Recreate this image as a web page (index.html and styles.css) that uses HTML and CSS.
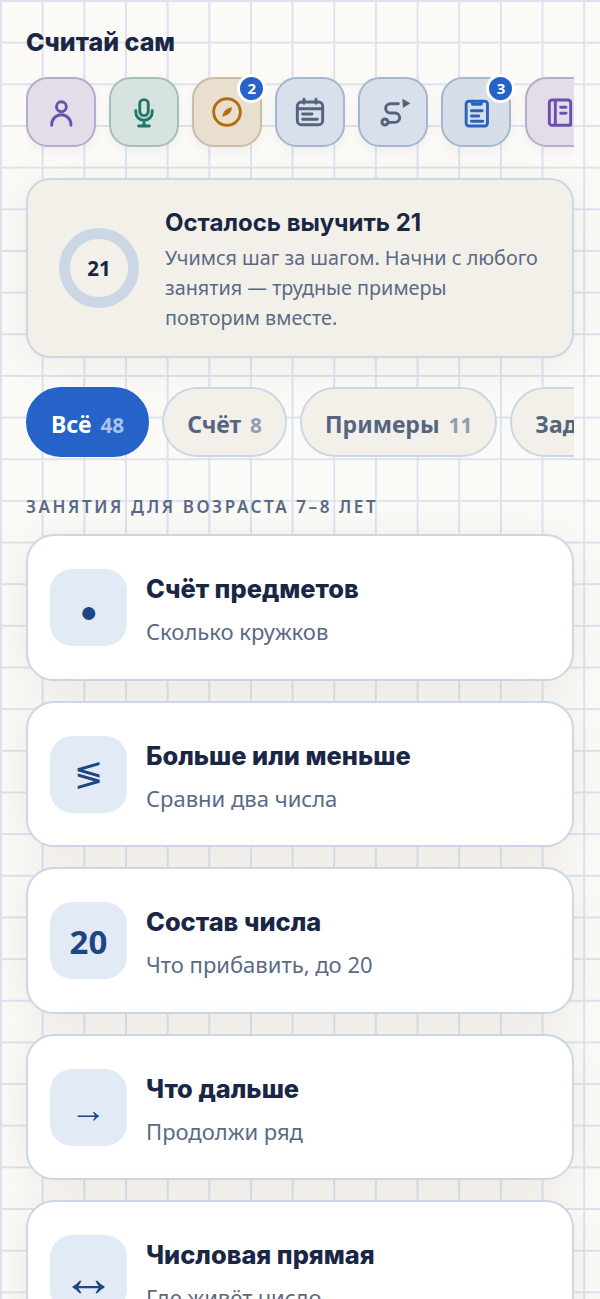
FILE: index.html
```html
<!DOCTYPE html>
<html lang="ru">
<head>
    <meta charset="UTF-8">
    <meta name="viewport" content="width=device-width, initial-scale=1.0">
    <title>Считай сам</title>
    <link rel="stylesheet" href="styles.css">
</head>
<body>
    <main class="page">
        <h1 class="app-title">Считай сам</h1>

        <div class="tools">
            <button class="tool tool-violet">
                <svg viewBox="0 0 24 24"><circle cx="12.300" cy="8" r="3.700"/><path d="M5 22c0-4.500 3-8 7.250-8s7.250 3.500 7.250 8"/></svg>
            </button>
            <button class="tool tool-green">
                <svg viewBox="0 0 24 24"><rect x="8.800" y="2.700" width="6.400" height="12" rx="3.200"/><path d="M5.800 11v1a6.200 6.200 0 0 0 12.400 0v-1M12 18.500v4M8 22.500h8"/></svg>
            </button>
            <button class="tool tool-amber">
                <svg viewBox="0 0 24 24"><circle cx="12" cy="12" r="10"/><path class="fill" d="M15.500 8.500c.2 2.800-1.200 5.700-7 7 .5-3.500 2.700-6.200 7-7z"/></svg>
                <span class="badge">2</span>
            </button>
            <button class="tool tool-slate">
                <svg viewBox="0 0 24 24"><rect x="2.500" y="4.500" width="19" height="17" rx="3"/><path d="M2.500 9.500h19M7.500 2.500v3M16.500 2.500v3M6.500 13.500h7M6.500 17.500h11"/></svg>
            </button>
            <button class="tool tool-slate">
                <svg viewBox="0 0 24 24"><circle cx="6" cy="19.500" r="2.300"/><path d="M8.300 19.800h5.200a3.500 3.500 0 0 0 0-7H10a3.500 3.500 0 0 1 0-7h6"/><path class="fill" d="M19 2l6 3.500-5.500 3.500z"/></svg>
            </button>
            <button class="tool tool-blue">
                <svg viewBox="0 0 24 24"><rect x="4.600" y="4" width="16" height="18.500" rx="2"/><path d="M9.300 4v2.200h6.600V4M8.600 11h8M8.600 15h5.500M8.600 19h8.500"/></svg>
                <span class="badge">3</span>
            </button>
            <button class="tool tool-violet">
                <svg viewBox="0 0 24 24"><path d="M20 22H6a2 2 0 0 1-2-2V5a2 2 0 0 1 2-2h12a2 2 0 0 1 2 2v17M8.500 3v19M12.500 8.500h4M12.500 13h4"/></svg>
            </button>
        </div>

        <section class="summary">
            <div class="ring">21</div>
            <div class="summary-text">
                <h2>Осталось выучить 21</h2>
                <p>Учимся шаг за шагом. Начни с любого занятия — трудные примеры повторим вместе.</p>
            </div>
        </section>

        <div class="filters">
            <button class="chip chip-active">Всё <span>48</span></button>
            <button class="chip">Счёт <span>8</span></button>
            <button class="chip">Примеры <span>11</span></button>
            <button class="chip">Задачи <span>9</span></button>
        </div>

        <h3 class="section-label">Занятия для возраста 7–8 лет</h3>

        <div class="lessons">
            <a class="lesson">
                <div class="lesson-icon lesson-dot">●</div>
                <div class="lesson-text"><h4>Счёт предметов</h4><p>Сколько кружков</p></div>
            </a>
            <a class="lesson">
                <div class="lesson-icon lesson-sym">≶</div>
                <div class="lesson-text"><h4>Больше или меньше</h4><p>Сравни два числа</p></div>
            </a>
            <a class="lesson">
                <div class="lesson-icon lesson-num">20</div>
                <div class="lesson-text"><h4>Состав числа</h4><p>Что прибавить, до 20</p></div>
            </a>
            <a class="lesson">
                <div class="lesson-icon lesson-arrow">→</div>
                <div class="lesson-text"><h4>Что дальше</h4><p>Продолжи ряд</p></div>
            </a>
            <a class="lesson">
                <div class="lesson-icon lesson-arrow-wide">↔</div>
                <div class="lesson-text"><h4>Числовая прямая</h4><p>Где живёт число</p></div>
            </a>
        </div>
    </main>
</body>
</html>
```
FILE: styles.css
```css
* { box-sizing: border-box; }
html, body { margin: 0; height: 100%; }
body {
    height: 1299px;
    overflow: hidden;
    font-family: "Noto Sans", sans-serif;
    color: #1a2744;
    background-color: #fbfaf7;
    background-image:
        linear-gradient(#dce3ee 1.7px, transparent 1.7px),
        linear-gradient(90deg, #dce3ee 1.7px, transparent 1.7px);
    background-size: 41.67px 41.67px;
}
.page { padding: 26px 26px 0; }

.app-title { margin: 0 0 19px; font: 800 25px/32px Inter, sans-serif; color: #1a2744; }

.tools { display: flex; gap: 13.100px; overflow: hidden; margin: -6px 0 -14px; padding: 6px 0 14px; }
.tool {
    position: relative;
    flex: none;
    width: 70px;
    height: 70px;
    padding: 0;
    border: 2px solid;
    border-radius: 22px;
    box-shadow: 0 4px 10px rgba(90, 100, 120, .08);
    display: flex;
    align-items: center;
    justify-content: center;
}
.tool svg { width: 32px; height: 32px; overflow: visible; fill: none; stroke: currentColor; stroke-width: 2.200; stroke-linecap: round; stroke-linejoin: round; }
.tool svg .fill { fill: currentColor; stroke: none; }
.tool-violet { background: #e3dde9; border-color: #b6aacf; color: #6a4fb0; }
.tool-green { background: #d7e3de; border-color: #a3bfbc; color: #1f7a65; }
.tool-amber { background: #e8dfce; border-color: #c9bba8; color: #b56c10; }
.tool-slate { background: #d8e0eb; border-color: #a5b6d3; color: #56637c; }
.tool-blue { background: #d6dfe7; border-color: #a5b6d3; color: #2a63bd; }
.badge {
    position: absolute;
    top: -5px;
    right: -6px;
    width: 29px;
    height: 29px;
    border: 3px solid #fff;
    border-radius: 50%;
    background: #2563c9;
    color: #fff;
    font: 700 15px/23px "Noto Sans", sans-serif;
    text-align: center;
}

.summary {
    display: flex;
    align-items: center;
    gap: 26px;
    height: 180px;
    margin-top: 31px;
    padding: 0 32px 0 31px;
    background: #f3f0ea;
    border: 2px solid #ccd7e6;
    border-radius: 24px;
    box-shadow: 0 8px 40px rgba(120, 110, 90, .1);
}
.ring {
    flex: none;
    width: 80px;
    height: 80px;
    border: 11px solid #ccd7e6;
    border-radius: 50%;
    display: flex;
    align-items: center;
    justify-content: center;
    font-weight: 700;
    font-size: 20.500px;
}
.summary h2 { margin: 0; font: 700 24px/40px Inter, sans-serif; }
.summary p { margin: 0; font-size: 19.800px; line-height: 30px; color: #5a6a85; }

.filters { display: flex; gap: 13px; overflow: hidden; margin-top: 29px; }
.chip {
    flex: none;
    height: 70px;
    padding: 3px 23px 0;
    border: 2px solid #ccd7e6;
    border-radius: 35px;
    background: #f3f0ea;
    color: #56657f;
    font: 700 23px "Noto Sans", sans-serif;
}
.chip span { margin-left: 3px; font-size: 20.800px; color: #929daf; }
.chip-active { background: #2563c9; border-color: #2563c9; color: #fff; }
.chip-active span { color: #a9c2ee; }

.section-label { margin: 39px 0 16px; font-size: 17px; line-height: 22px; font-weight: 600; letter-spacing: 2.600px; text-transform: uppercase; color: #5a6a85; }

.lessons { display: flex; flex-direction: column; gap: 20px; }
.lesson {
    display: flex;
    align-items: center;
    gap: 19px;
    height: 146.500px;
    padding: 1px 22px 0;
    background: #fff;
    border: 2px solid #ccd7e6;
    border-radius: 28px;
    box-shadow: 0 8px 40px rgba(120, 110, 90, .12);
}
.lesson-icon {
    flex: none;
    width: 77px;
    height: 77px;
    border-radius: 22px;
    background: #e2eaf5;
    color: #1f4583;
    display: flex;
    align-items: center;
    justify-content: center;
    font-size: 30px;
    line-height: 1;
}
.lesson-dot { padding-top: 6px; }
.lesson-num { padding-top: 2px; font-weight: 700; font-size: 33px; }
.lesson-sym { font-family: "DejaVu Sans", sans-serif; font-size: 35px; }
.lesson-arrow { padding-top: 6px; font-family: "Liberation Sans", sans-serif; font-size: 36px; }
.lesson-arrow-wide { padding-top: 6px; font-family: "Liberation Sans", sans-serif; font-size: 54px; }
.lesson-text { padding-top: 4px; }
.lesson h4 { margin: 0 0 11px; font: 800 25.400px/32px Inter, sans-serif; }
.lesson p { margin: 0; font-size: 22px; line-height: 30px; color: #5a6a85; }
```
